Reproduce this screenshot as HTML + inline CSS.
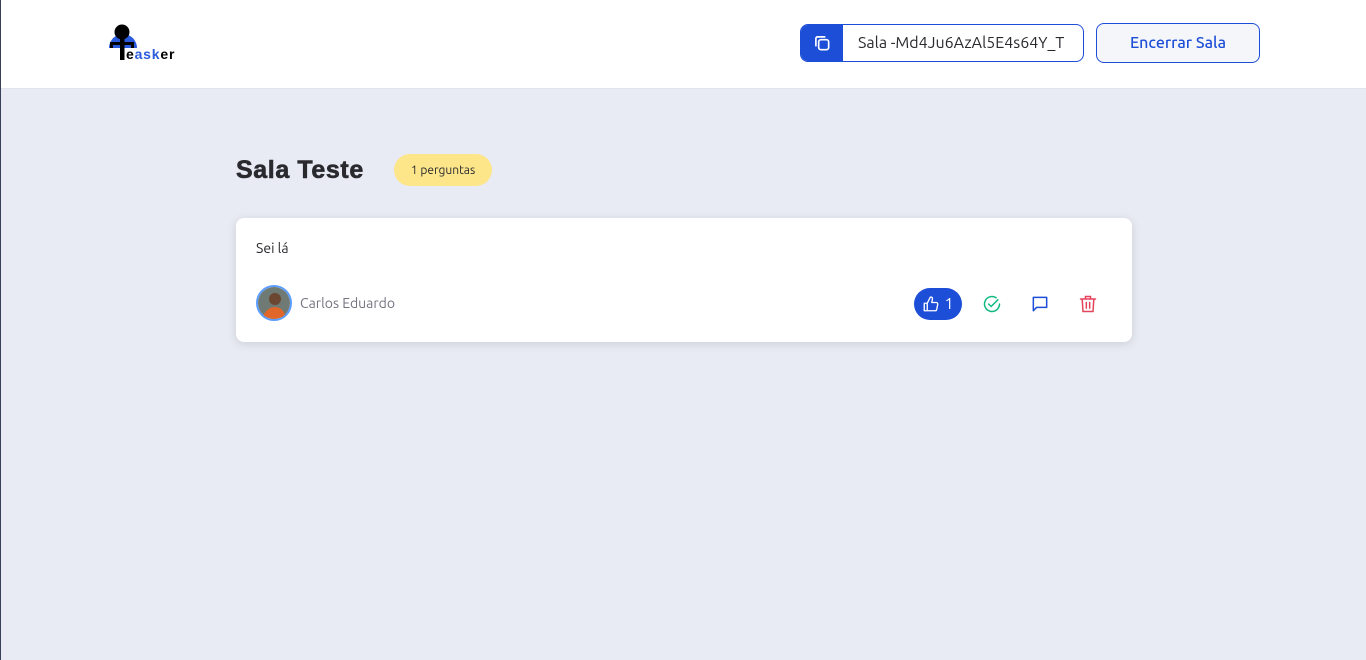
<!DOCTYPE html>
<html><head><meta charset="utf-8"><style>
*{box-sizing:border-box;margin:0;padding:0}
body{width:1366px;height:660px;background:#e8ebf4;font-family:"Ubuntu","Liberation Sans",sans-serif;position:relative;overflow:hidden}
.bl{position:absolute;left:0;top:0;width:1px;height:660px;background:#3a3f5a;z-index:5}
header{position:absolute;left:0;top:0;width:1366px;height:89px;background:#fff;border-bottom:1px solid #e2e4ea}
.logo{position:absolute;left:108px;top:23px}
.code{position:absolute;left:800px;top:24px;width:284px;height:38px;border:1px solid #1d4ed8;border-radius:8px;display:flex;overflow:hidden;background:#fff}
.code .ic{width:42px;background:#1d4ed8;display:flex;align-items:center;justify-content:center}
.code span{flex:1;display:flex;align-items:center;padding-left:15px;font-size:16px;color:#29292e}
.end{position:absolute;left:1096px;top:23px;width:164px;height:40px;border:1px solid #1d4ed8;border-radius:8px;background:#f5f6f9;color:#1d4ed8;font-size:16px;font-weight:500;display:flex;align-items:center;justify-content:center}
h1{position:absolute;left:236px;top:156px;font-family:"Liberation Sans",sans-serif;font-weight:900;font-size:25px;color:#29292e;letter-spacing:0.6px;-webkit-text-stroke:0.6px #29292e}
.badge{position:absolute;left:394px;top:154px;width:98px;height:32px;border-radius:16px;background:#fde68a;font-size:12px;color:#29292e;display:flex;align-items:center;justify-content:center}
.card{position:absolute;left:236px;top:218px;width:896px;height:124px;background:#fff;border-radius:8px;box-shadow:0 2px 10px rgba(0,0,0,.12)}
.q{position:absolute;left:20px;top:22px;font-size:14px;color:#29292e}
.av{position:absolute;left:20px;top:67px;width:36px;height:36px;border-radius:50%;border:2px solid #5b9cff;overflow:hidden}
.name{position:absolute;left:64px;top:77px;font-size:14px;color:#737380}
.like{position:absolute;left:678px;top:70px;width:48px;height:32px;border-radius:16px;background:#1d4ed8;color:#fff;display:flex;align-items:center;justify-content:center;gap:4px;font-size:16px}
.i{position:absolute;top:76px}
</style></head><body>
<div class="bl"></div>
<header>
<div class="logo"><svg width="75" height="40" viewBox="0 0 75 40">
<path d="M1 25 A14 14 0 0 1 29 25 Z" fill="#2a5bdc"/>
<circle cx="14" cy="9" r="7.5" fill="#000"/>
<rect x="12" y="13" width="4.5" height="24" fill="#000"/>
<rect x="2" y="19" width="24" height="3" fill="#000"/>
<rect x="2" y="19" width="3" height="6" fill="#000"/>
<rect x="23" y="19" width="3" height="6" fill="#000"/>
<text x="18" y="36" font-family="Liberation Sans,sans-serif" font-weight="bold" font-size="14" letter-spacing="0.8"><tspan fill="#000">e</tspan><tspan fill="#2a5bdc">ask</tspan><tspan fill="#000">er</tspan></text>
</svg></div>
<div class="code"><div class="ic"><svg width="20" height="20" viewBox="0 0 18 18" fill="none" stroke="#fff" stroke-width="1.5"><rect x="6" y="6" width="9" height="9" rx="2"/><path d="M12 3.5H5a1.5 1.5 0 0 0-1.5 1.5v7"/></svg></div><span>Sala -Md4Ju6AzAl5E4s64Y_T</span></div>
<div class="end">Encerrar Sala</div>
</header>
<h1>Sala Teste</h1>
<div class="badge">1 perguntas</div>
<div class="card">
<div class="q">Sei lá</div>
<div class="av"><svg width="32" height="32"><rect width="32" height="32" fill="#6f7a75"/><circle cx="17" cy="12" r="6" fill="#6b4630"/><path d="M4 32 Q8 20 17 20 Q26 20 28 32Z" fill="#e0662a"/></svg></div>
<div class="name">Carlos Eduardo</div>
<div class="like"><svg width="18" height="18" viewBox="0 0 24 24" fill="none" stroke="#fff" stroke-width="1.8" stroke-linejoin="round"><path d="M7 11v10H3V11h4zM7 11l4-8a2 2 0 0 1 3 2l-1 5h6a2 2 0 0 1 2 2.3l-1.4 7A2 2 0 0 1 17.6 21H7"/></svg><span>1</span></div>
<svg class="i" style="left:746px" width="20" height="20" viewBox="0 0 24 24" fill="none" stroke="#10b981" stroke-width="1.8" stroke-linecap="round"><path d="M21 12a9 9 0 1 1-4-7.5"/><path d="M8 12l3 3 8-8"/></svg>
<svg class="i" style="left:794px" width="20" height="20" viewBox="0 0 24 24" fill="none" stroke="#1d4ed8" stroke-width="1.8" stroke-linejoin="round"><path d="M4 4h16v12H8l-4 4z"/></svg>
<svg class="i" style="left:842px" width="20" height="20" viewBox="0 0 24 24" fill="none" stroke="#e5425b" stroke-width="1.8" stroke-linecap="round"><path d="M3 6h18M9 6V3h6v3M5 6l1 15h12l1-15M10 10v7M14 10v7"/></svg>
</div>
</body></html>
